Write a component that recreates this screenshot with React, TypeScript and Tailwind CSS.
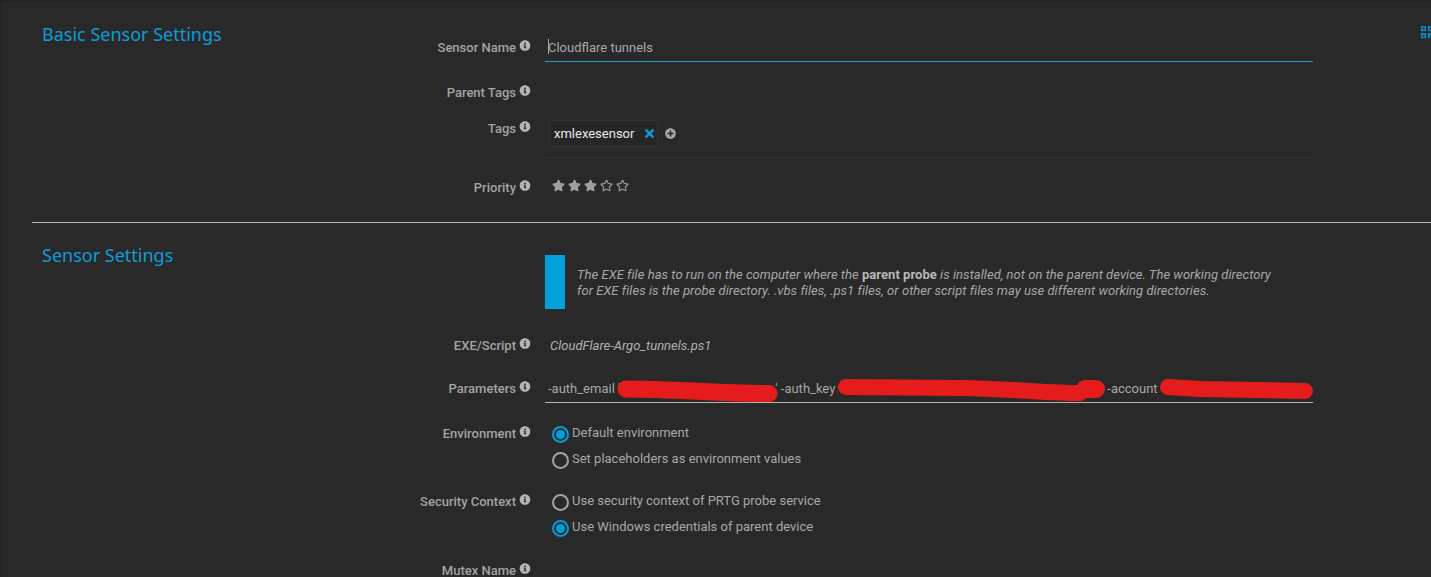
import type { ReactNode } from "react";
import { FaInfoCircle, FaPlusCircle, FaQrcode, FaRegStar, FaStar, FaTimes } from "react-icons/fa";

interface RowProps {
  label: string;
  className?: string;
  children?: ReactNode;
}

function Row({ label, className, children }: RowProps) {
  return (
    <div className={`flex ${className ?? ""}`}>
      <div className="flex w-[115px] shrink-0 justify-end gap-[3px] font-medium text-[#a3a3a3]">
        <span className="whitespace-nowrap">{label}</span>
        <FaInfoCircle className="mt-0 w-[12px] shrink-0 text-[11px] text-[#b5b5b5]" />
      </div>
      <div className="ml-[14px] w-[768px]">{children}</div>
    </div>
  );
}

function Radio({ label, checked }: { label: string; checked?: boolean }) {
  return (
    <div className="flex h-[26px] pl-[7px]">
      <span
        className={`mt-[3px] flex h-[17px] w-[17px] shrink-0 items-center justify-center rounded-full border-2 ${
          checked ? "border-[#019fdc]" : "border-[#a3a3a3]"
        }`}
      >
        {checked && <span className="h-[9px] w-[9px] rounded-full bg-[#019fdc]" />}
      </span>
      <span className="ml-[3px] leading-[20px] text-[#a8a8a8]">{label}</span>
    </div>
  );
}

export default function App() {
  return (
    <div className="h-[577px] w-[1431px] overflow-hidden border-t-2 border-l-2 border-[#232323] bg-[#292929] font-['Roboto',sans-serif] text-[13px] leading-[15px]">
      {/* Basic settings */}
      <section className="ml-[30px] flex h-[221px] border-b border-[#b4b4b4]">
        <h2 className="w-[384px] shrink-0 pt-[21px] pl-[10px] font-['Noto_Sans',sans-serif] text-[18px] leading-[22px] text-[#0f9bd8]">
          Basic Sensor Settings
        </h2>
        <div className="w-[897px] shrink-0 pt-[38px]">
          <Row label="Sensor Name" className="h-[22px]">
            <div className="flex h-[22px] border-b border-[#19a0cf] pl-[3px] text-[#a8a8a8]">
              <span className="mt-[-1px] h-[15px] w-px bg-[#a8a8a8]" />
              <span className="ml-[-1px]">Cloudflare tunnels</span>
            </div>
          </Row>
          <Row label="Parent Tags" className="mt-[23px] h-[15px]" />
          <Row label="Tags" className="mt-[21px]">
            <div className="flex h-[37px] flex-col border-b border-[#363636] pl-[4px]">
              <div className="mt-[-1px] flex items-center">
                <div className="flex h-[27px] w-[109px] items-center border border-[#333333] bg-[#262626] pl-[4px] text-[#e8e8e8]">
                  xmlexesensor
                  <FaTimes className="ml-[9px] text-[13px] text-[#0f9bd8]" />
                </div>
                <FaPlusCircle className="ml-[7px] text-[11px] text-[#a8a8a8]" />
              </div>
            </div>
          </Row>
          <Row label="Priority" className="mt-[22px]">
            <div className="mt-[-1px] flex gap-[3px] pl-[7px] text-[13px] text-[#a0a0a0]">
              <FaStar />
              <FaStar />
              <FaStar />
              <FaRegStar />
              <FaRegStar />
            </div>
          </Row>
        </div>
        <div className="mt-[23px] ml-[107px] w-[11px] shrink-0 overflow-hidden">
          <FaQrcode className="text-[14px] text-[#0f86c0]" />
        </div>
      </section>

      {/* Sensor settings */}
      <section className="ml-[30px] flex">
        <h2 className="w-[384px] shrink-0 pt-[21px] pl-[10px] font-['Noto_Sans',sans-serif] text-[18px] leading-[22px] text-[#0f9bd8]">
          Sensor Settings
        </h2>
        <div className="w-[897px] shrink-0">
          <div className="mt-[32px] ml-[129px] flex h-[54px] w-[768px]">
            <div className="w-[20px] shrink-0 bg-[#01a2db]" />
            <p className="mt-[12px] ml-[12px] w-[710px] text-[13px] leading-[16px] tracking-[0.04px] text-[#a8a8a8] italic">
              The EXE file has to run on the computer where the <b className="font-bold not-italic text-[#b8b8b8]">parent probe</b> is installed, not on the parent device. The working directory
              <br />
              for EXE files is the probe directory. .vbs files, .ps1 files, or other script files may use different working directories.
            </p>
          </div>

          <Row label="EXE/Script" className="mt-[29px]">
            <div className="pl-[5px] text-[#b0b0b0] italic">CloudFlare-Argo_tunnels.ps1</div>
          </Row>

          <Row label="Parameters" className="mt-[28px]">
            <div className="relative mt-[-7px] h-[29px] border-b border-[#b4b4b4] pt-[7px] pl-[3px] whitespace-nowrap text-[#a8a8a8]">
              -auth_email '<span className="inline-block w-[155px]" />' -auth_key
              <span className="inline-block w-[272px]" />
              -account
              <svg className="absolute top-0 left-0 h-[29px] w-[768px]" viewBox="0 0 768 29" fill="none" stroke="#e61c1c" strokeLinecap="round">
                <path d="M81 15 C130 15 180 20 224 19.5" strokeWidth="17" />
                <path d="M301 13 L415 14 C465 15 505 19 535 19" strokeWidth="16" />
                <path d="M540 15 L551 15" strokeWidth="18" />
                <path d="M623 13 L655 15 L760 17" strokeWidth="16" />
              </svg>
            </div>
          </Row>

          <Row label="Environment" className="mt-[23px]">
            <div className="mt-[-3px]">
              <Radio label="Default environment" checked />
              <Radio label="Set placeholders as environment values" />
            </div>
          </Row>

          <Row label="Security Context" className="mt-[19px]">
            <div className="mt-[-3px]">
              <Radio label="Use security context of PRTG probe service" />
              <Radio label="Use Windows credentials of parent device" checked />
            </div>
          </Row>

          <Row label="Mutex Name" className="mt-[20px]" />
        </div>
      </section>
    </div>
  );
}
